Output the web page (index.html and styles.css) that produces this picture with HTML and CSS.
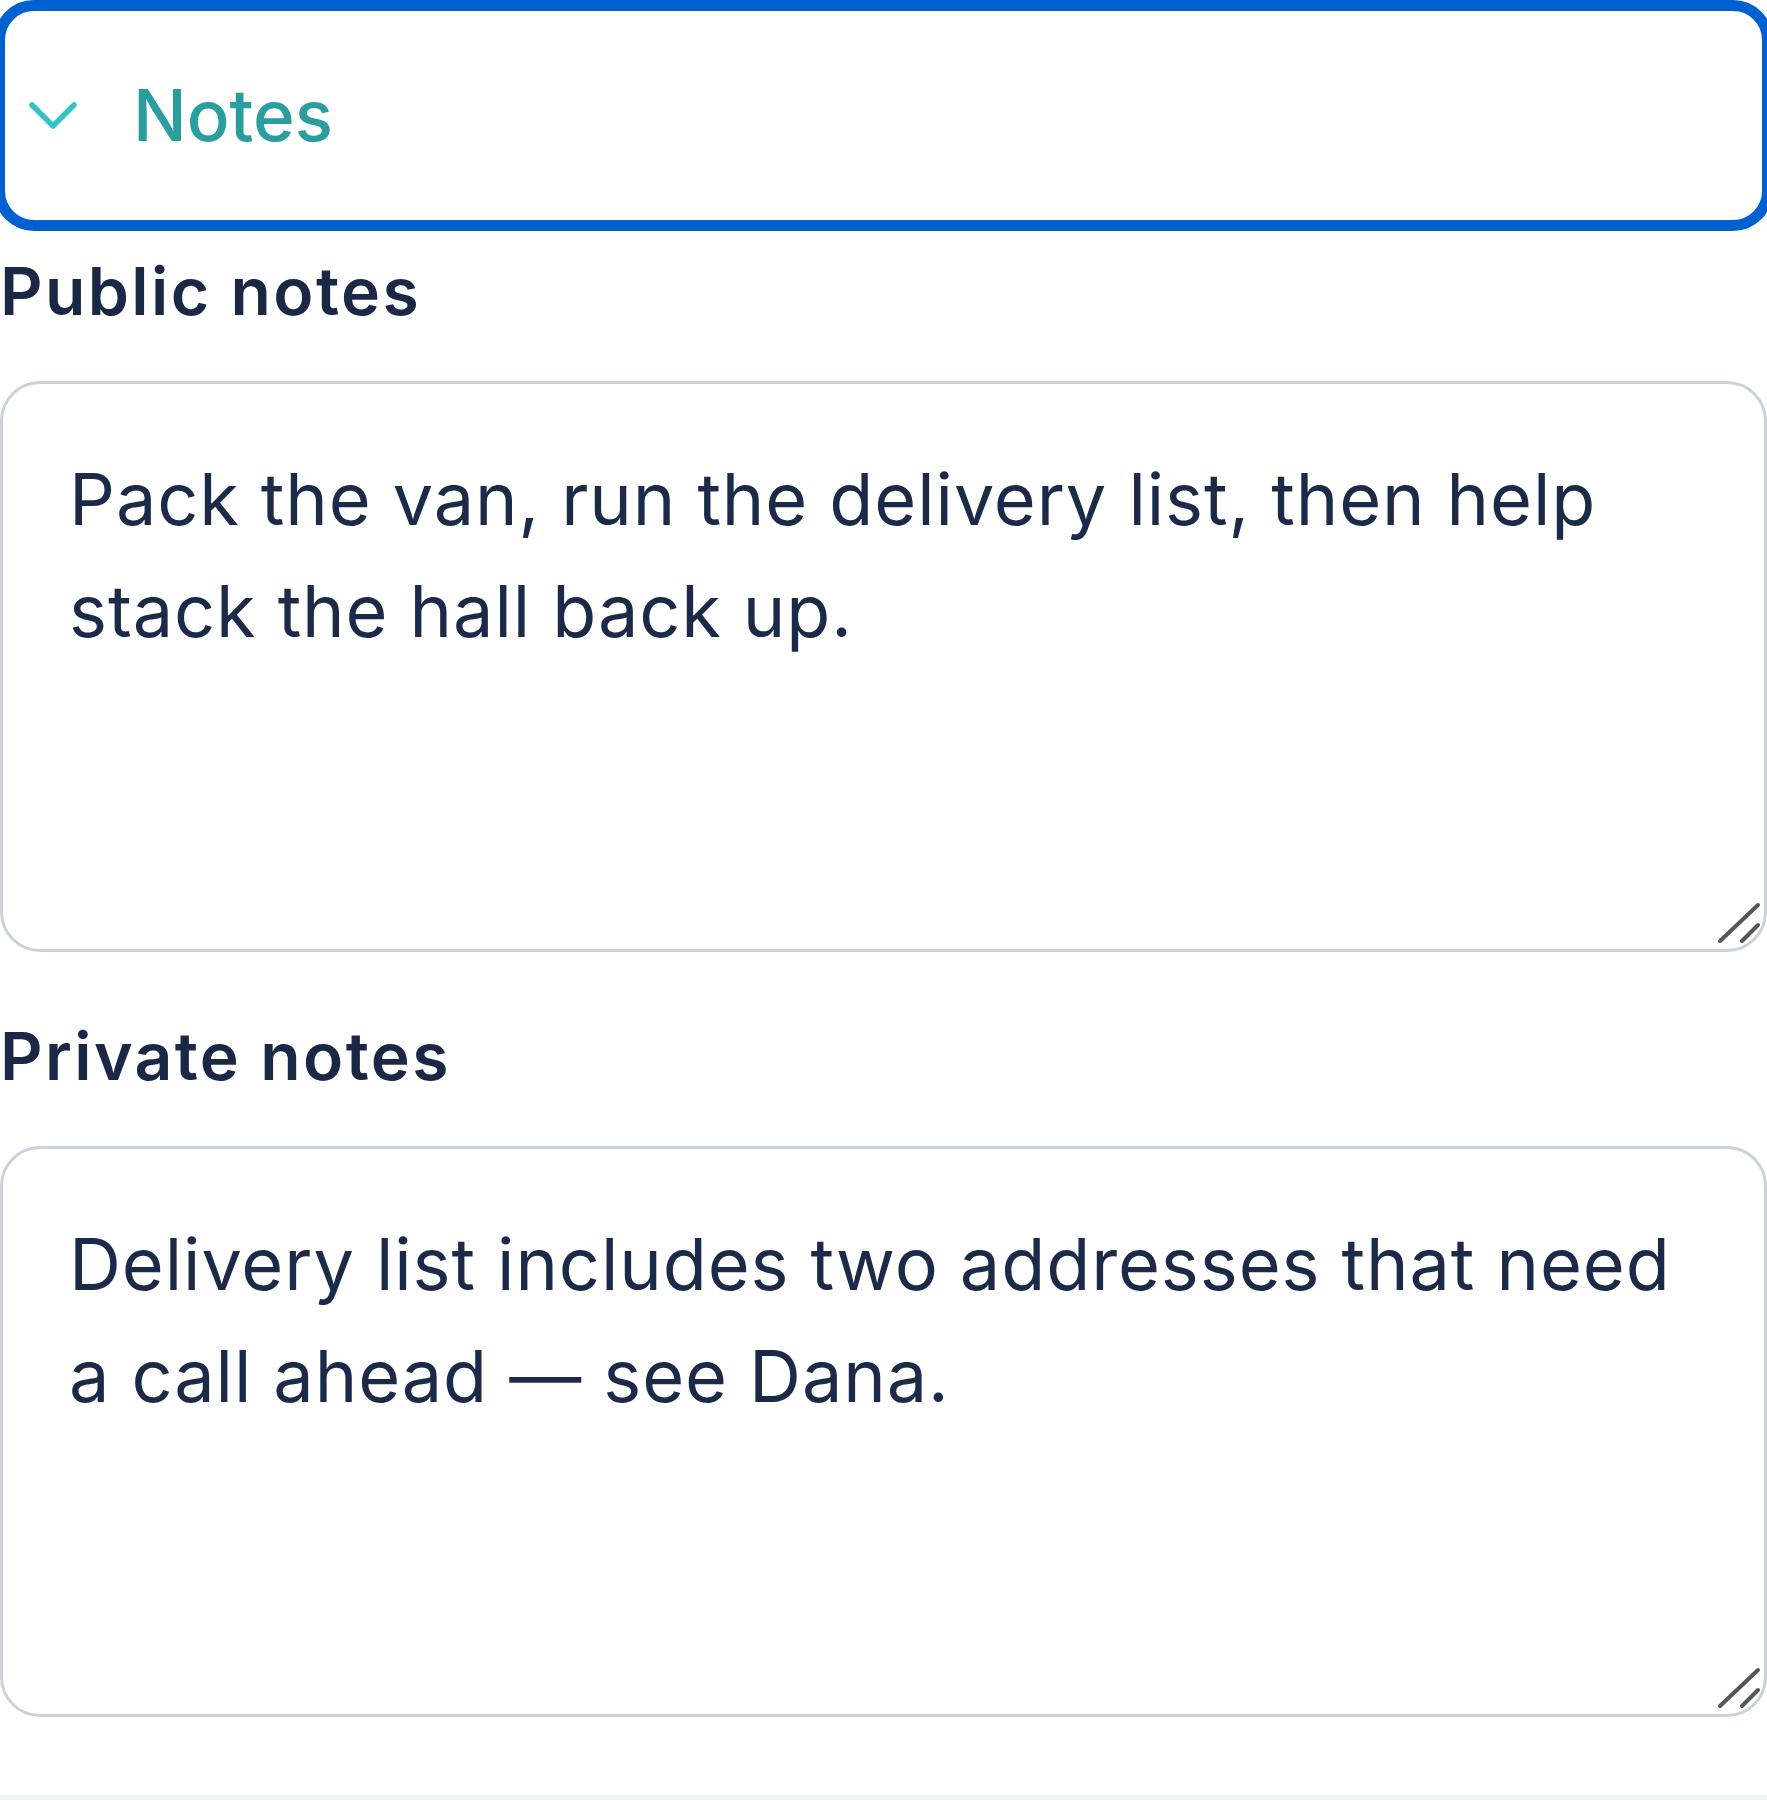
FILE: index.html
```html
<!DOCTYPE html>
<html lang="en">
<head>
<meta charset="utf-8">
<title>Notes</title>
<link rel="stylesheet" href="styles.css">
</head>
<body>
<div class="panel">
  <div class="toggle">
    <svg class="chev" viewBox="0 0 48 28" width="48" height="28" aria-hidden="true">
      <path d="M3 3 L24 24 L45 3" fill="none" stroke="#35c3c9" stroke-width="5.5" stroke-linecap="round" stroke-linejoin="round"/>
    </svg>
    <span class="toggle-title">Notes</span>
  </div>

  <label class="label" for="pub">Public notes</label>
  <div class="field">
    <textarea id="pub" class="area">Pack the van, run the delivery list, then help stack the hall back up.</textarea>
    <svg class="grip" viewBox="0 0 44 44" width="44" height="44" aria-hidden="true">
      <path d="M3 41 L41 5 M25 41 L41 25" fill="none" stroke="#575757" stroke-width="4" stroke-linecap="round"/>
    </svg>
  </div>

  <label class="label label-2" for="priv">Private notes</label>
  <div class="field">
    <textarea id="priv" class="area">Delivery list includes two addresses that need a call ahead — see Dana.</textarea>
    <svg class="grip" viewBox="0 0 44 44" width="44" height="44" aria-hidden="true">
      <path d="M3 41 L41 5 M25 41 L41 25" fill="none" stroke="#575757" stroke-width="4" stroke-linecap="round"/>
    </svg>
  </div>
</div>
</body>
</html>
```

FILE: styles.css
```css
html, body {
  margin: 0;
  padding: 0;
}
body {
  background: #f2f3f5;
  font-family: Inter, "Noto Sans", sans-serif;
  color: #1b2a48;
}
.panel {
  background: #ffffff;
  overflow: hidden;
  padding-bottom: 78px;
}
.toggle {
  box-sizing: border-box;
  height: 231px;
  margin: 0 -6px;
  border: 11px solid #0060d0;
  border-radius: 40px;
  display: flex;
  align-items: center;
  gap: 56px;
  padding-left: 24px;
}
.chev {
  display: block;
  flex: none;
}
.toggle-title {
  font-size: 71px;
  font-weight: 500;
  color: #2a9d9f;
  line-height: 1;
}
.label {
  display: block;
  margin-top: 20px;
  font-size: 66px;
  font-weight: 600;
  letter-spacing: 2.4px;
  line-height: 80px;
  color: #1a2846;
}
.label-2 {
  margin-top: 64px;
}
.field {
  position: relative;
  margin-top: 50px;
}
.area {
  display: block;
  box-sizing: border-box;
  width: 100%;
  height: 571px;
  margin: 0;
  padding: 59px 66px;
  border: 3px solid #cdd1d8;
  border-radius: 40px;
  font-family: Inter, "Noto Sans", sans-serif;
  font-size: 72px;
  letter-spacing: 0.9px;
  line-height: 112px;
  color: #1b2a48;
  background: #ffffff;
  resize: none;
  outline: none;
  overflow: hidden;
}
.grip {
  position: absolute;
  right: 6px;
  bottom: 8px;
}
```
